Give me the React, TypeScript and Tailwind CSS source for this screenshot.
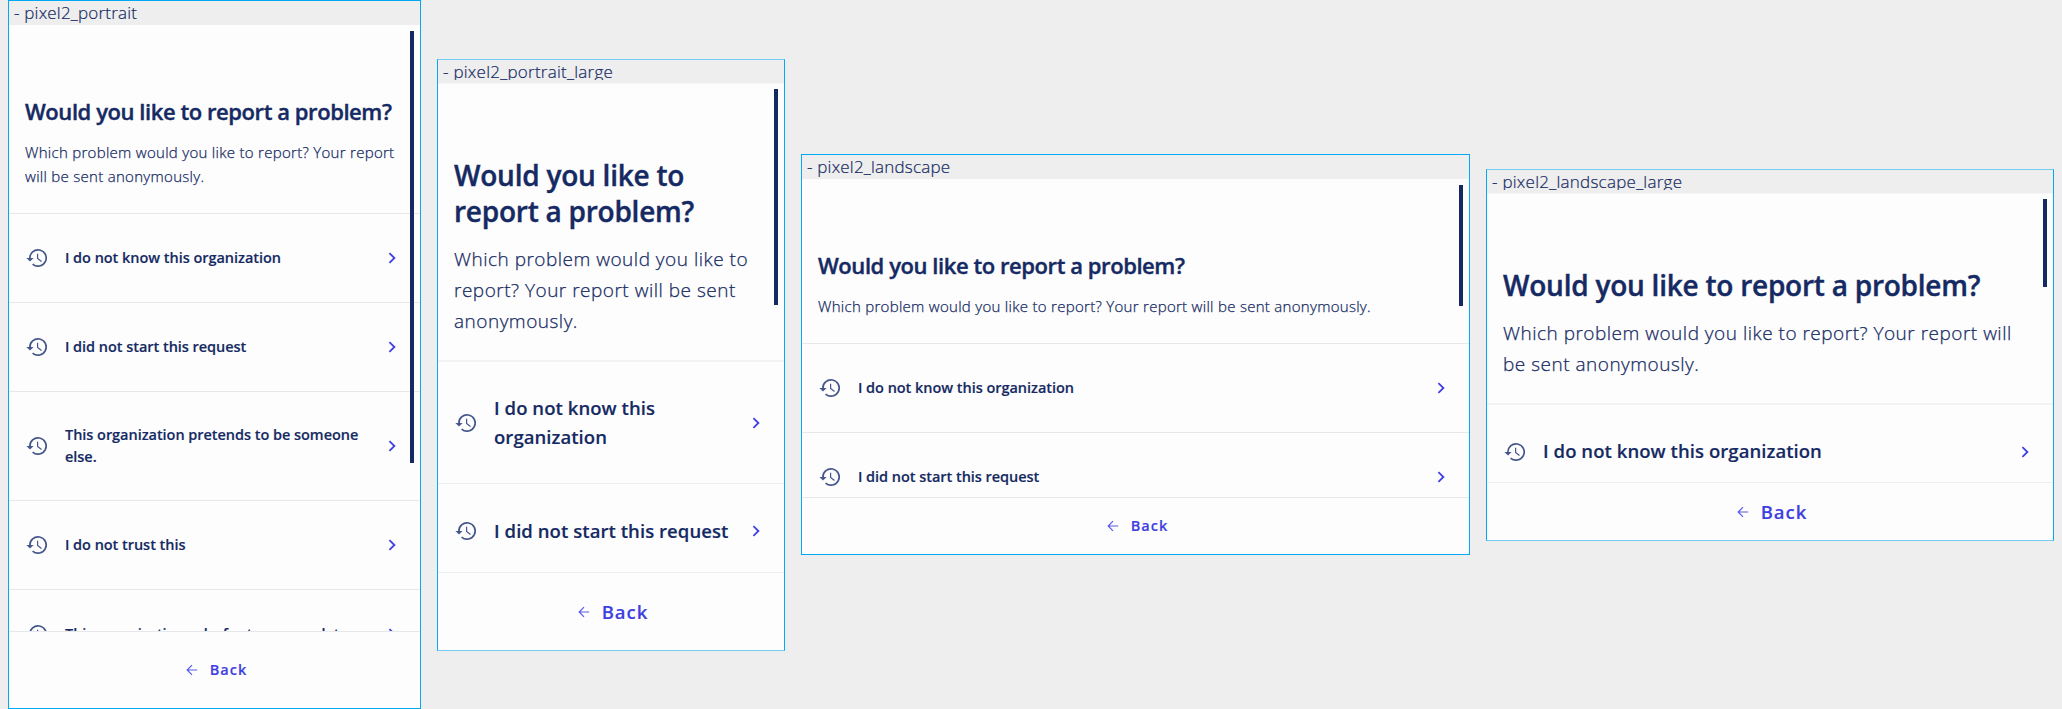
import clsx from "clsx";

type Screen = {
  name: string;
  large: boolean;
  frame: string;
  header: string;
  thumb: string;
  footer: string;
  title: string[];
  body: string[];
  items: { lines: string[]; height: string }[];
};

const screens: Screen[] = [
  {
    name: "pixel2_portrait",
    large: false,
    frame: "w-[413px] h-[709px]",
    header: "h-[189px]",
    thumb: "h-[432px]",
    footer: "h-[77px]",
    title: ["Would you like to report a problem?"],
    body: ["Which problem would you like to report? Your report", "will be sent anonymously."],
    items: [
      { lines: ["I do not know this organization"], height: "h-[89px]" },
      { lines: ["I did not start this request"], height: "h-[89px]" },
      { lines: ["This organization pretends to be someone", "else."], height: "h-[109px]" },
      { lines: ["I do not trust this"], height: "h-[89px]" },
      { lines: ["This organization asks for too many data"], height: "h-[89px]" },
    ],
  },
  {
    name: "pixel2_portrait_large",
    large: true,
    frame: "w-[348px] h-[592px] mt-[59px]",
    header: "h-[278px]",
    thumb: "h-[216px]",
    footer: "h-[78px]",
    title: ["Would you like to", "report a problem?"],
    body: ["Which problem would you like to", "report? Your report will be sent", "anonymously."],
    items: [
      { lines: ["I do not know this", "organization"], height: "h-[122px]" },
      { lines: ["I did not start this request"], height: "h-[95px]" },
    ],
  },
  {
    name: "pixel2_landscape",
    large: false,
    frame: "w-[669px] h-[401px] mt-[154px]",
    header: "h-[165px]",
    thumb: "h-[121px]",
    footer: "h-[57px]",
    title: ["Would you like to report a problem?"],
    body: ["Which problem would you like to report? Your report will be sent anonymously."],
    items: [
      { lines: ["I do not know this organization"], height: "h-[89px]" },
      { lines: ["I did not start this request"], height: "h-[89px]" },
    ],
  },
  {
    name: "pixel2_landscape_large",
    large: true,
    frame: "w-[568px] h-[372px] mt-[169px]",
    header: "h-[211px]",
    thumb: "h-[88px]",
    footer: "h-[58px]",
    title: ["Would you like to report a problem?"],
    body: ["Which problem would you like to report? Your report will", "be sent anonymously."],
    items: [{ lines: ["I do not know this organization"], height: "h-[94px]" }],
  },
];

function HistoryIcon() {
  return (
    <svg viewBox="0 0 24 24" className="size-6 shrink-0" fill="none" stroke="#45568a">
      <path d="M4.9 12.6A8.15 8.15 0 1 1 7.6 18.1" strokeWidth="1.7" />
      <path d="M1.4 12h7.2L5 15.6z" fill="#45568a" stroke="none" />
      <path d="M12.6 7.8v4.7l3.9 2.9" strokeWidth="1.2" />
    </svg>
  );
}

function ChevronIcon() {
  return (
    <svg viewBox="0 0 8 12" className="h-3 w-2 shrink-0" fill="none" stroke="#3f3fe6" strokeWidth="1.8">
      <path d="M1.4 1.1 6.4 6 1.4 10.9" />
    </svg>
  );
}

function ArrowIcon() {
  return (
    <svg viewBox="0 0 12 12" className="size-3 shrink-0" fill="none" stroke="#5a5ae8" strokeWidth="1.2">
      <path d="M11.2 6H1.4M6 1.2 1.2 6 6 10.8" />
    </svg>
  );
}

function Lines({ lines }: { lines: string[] }) {
  return (
    <>
      {lines.map((line) => (
        <span key={line} className="block whitespace-nowrap">
          {line}
        </span>
      ))}
    </>
  );
}

function Device({ screen }: { screen: Screen }) {
  const { large } = screen;
  const divider = large ? "border-[#eeeff2]" : "border-[#e6e8ec]";
  return (
    <section
      className={clsx(
        "relative flex shrink-0 flex-col overflow-hidden border border-[#03a9f4] bg-[#fdfdfd]",
        large && "border-y-[#74cbf3]",
        screen.frame,
      )}
    >
      <div className={clsx("h-6 shrink-0 bg-[#eeeeee]", large && "border-b border-[#f6f6f6]")}>
        <p
          className={clsx(
            "pl-[5px] text-[17px] leading-[23px] font-light [-webkit-text-stroke:0.2px]",
            large ? "h-5 overflow-hidden tracking-[0.25px]" : "tracking-[0.2px]",
          )}
        >
          - {screen.name}
        </p>
      </div>
      <div className="min-h-0 grow overflow-hidden">
        <header
          className={clsx("pl-4", large ? "border-b-2 border-[#f3f3f5] pt-[73px]" : "border-b border-[#e6e8ec] pt-[72px]", screen.header)}
        >
          <h1
            className={clsx(
              "font-semibold [-webkit-text-stroke:0.4px]",
              large ? "text-[28px] leading-9 tracking-[-0.24px]" : "text-[22px] leading-7 tracking-[-0.43px]",
            )}
          >
            <Lines lines={screen.title} />
          </h1>
          <p
            className={clsx(
              "mt-[15px] font-light [-webkit-text-stroke:0.25px]",
              large ? "text-[19px] leading-[31px] tracking-[0.5px]" : "text-[15px] leading-6 tracking-[0.29px]",
            )}
          >
            <Lines lines={screen.body} />
          </p>
        </header>
        <ul>
          {screen.items.map((item) => (
            <li key={item.lines[0]} className={clsx("flex items-center border-b pr-6 pl-4", divider, item.height)}>
              <HistoryIcon />
              <div
                className={clsx(
                  "ml-4 grow font-semibold [-webkit-text-stroke:0.15px]",
                  large ? "pb-0.5 text-[18.5px] leading-[29px] tracking-[0.06px]" : "text-[14.5px] leading-[22px] tracking-[-0.04px]",
                )}
              >
                <Lines lines={item.lines} />
              </div>
              <ChevronIcon />
            </li>
          ))}
        </ul>
      </div>
      <footer
        className={clsx(
          "flex shrink-0 items-center justify-center border-t pl-1 font-semibold tracking-[1px] text-[#3f3fdf] [-webkit-text-stroke:0.15px]",
          divider,
          screen.footer,
          large ? "text-[18.5px]" : "text-[14.5px]",
        )}
      >
        <ArrowIcon />
        <span className="ml-3">Back</span>
      </footer>
      <div className={clsx("absolute right-1.5 w-1 bg-[#152a63]", large ? "top-[29px]" : "top-[30px]", screen.thumb)} />
    </section>
  );
}

export default function App() {
  return (
    <main className="flex h-[709px] w-[2062px] items-start gap-4 overflow-hidden bg-[#eeeeee] px-2 font-['Open_Sans',sans-serif] text-[#152a63]">
      {screens.map((screen) => (
        <Device key={screen.name} screen={screen} />
      ))}
    </main>
  );
}
